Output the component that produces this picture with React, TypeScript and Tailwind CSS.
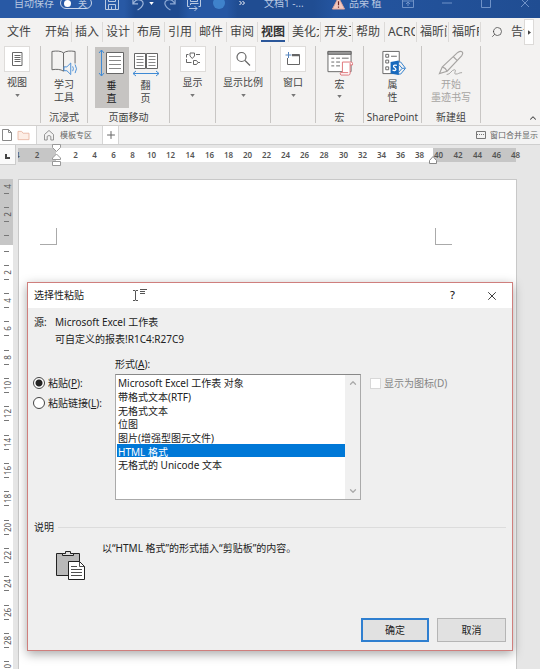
import { ChevronDown, ChevronUp, Plus, Search, X } from "lucide-react";
import { useState } from "react";
import type { ReactNode } from "react";

const tabs = ["插入", "设计", "布局", "引用", "邮件", "审阅", "视图"];
const addinTabs = ["美化大师", "开发工具", "帮助", "ACROBAT", "福昕阅读", "福昕PDF"];

const formats = [
	"Microsoft Excel 工作表 对象",
	"带格式文本(RTF)",
	"无格式文本",
	"位图",
	"图片(增强型图元文件)",
	"HTML 格式",
	"无格式的 Unicode 文本",
];

const rulerNumbers = Array.from({ length: 24 }, (_, i) => (i + 1) * 2);
const sideNumbers = Array.from({ length: 15 }, (_, i) => (i + 1) * 2);

function Caret() {
	return (
		<svg viewBox="0 0 6 4" className="h-[3px] w-[5px]" fill="currentColor">
			<path d="M0 0h6L3 4z" />
		</svg>
	);
}

function TitleBar() {
	return (
		<header className="h-[18px] overflow-hidden bg-[#2455a0] bg-[linear-gradient(90deg,#2859a5_0,#2859a5_23%,#1f4b90_25%,#1f4b90_33%,#2657a3_35%,#2657a3_42%,#204d92_44%,#204d92_58%,#2455a0_62%,#204d92_100%)] text-[10px] text-[#b9c9e2]">
			<div className="-mt-[13px] flex h-8 items-center whitespace-nowrap">
				<span className="ml-2 w-[46px] shrink-0 text-right">自动保存</span>
				<button
					type="button"
					aria-label="自动保存"
					className="ml-1.5 flex h-3 w-8 shrink-0 items-center justify-between rounded-full border border-[#c8d5ea] pl-[3px] pr-1 text-[9px] leading-none"
				>
					<i className="size-[7px] rounded-full bg-white" />
					<span>关</span>
				</button>
				<button type="button" aria-label="保存" className="flex w-10 shrink-0 justify-center">
					<svg viewBox="0 0 16 16" className="size-4" fill="none" stroke="currentColor">
						<path d="M1.500 1.500h13v13h-13zM4.500 1.500v5h7v-5M4.500 14.500v-5h7v5M7.500 11.500v3" />
					</svg>
				</button>
				<button type="button" aria-label="撤消" className="w-[13px] shrink-0">
					<svg viewBox="0 0 14 16" className="h-4 w-[13px]" fill="none" stroke="#9db5da" strokeWidth="1.300">
						<path d="M1 4v5h5.500M1 9C3 5.500 6 3.500 9.500 5s4 6-3.500 10.500" />
					</svg>
				</button>
				<span className="flex w-3 shrink-0 justify-center text-white">
					<Caret />
				</span>
				<button type="button" aria-label="恢复" className="flex w-6 shrink-0 justify-center">
					<svg viewBox="0 0 14 16" className="h-4 w-[13px]" fill="none" stroke="#8aa7d3" strokeWidth="1.300">
						<path d="M13 4v5H7.500M13 9C11 5.500 8 3.500 4.500 5S.5 11 8 15.500" />
					</svg>
				</button>
				<button type="button" aria-label="发送" className="flex w-[26px] shrink-0 justify-center">
					<svg viewBox="0 0 16 16" className="size-4" fill="none" stroke="currentColor">
						<path d="M3.500 11.500h-2v-10h13v10h-2M4.500 1.500v5h7v-5M4.500 10V8.500h8M3 13.500h8M8.500 11l2.500 2.500L8.500 16" />
					</svg>
				</button>
				<span className="flex w-6 shrink-0 justify-center">
					<i className="size-3 rounded-full bg-[#3f82cb]" />
				</span>
				<span className="flex w-[22px] shrink-0 justify-center text-white">
					<svg viewBox="0 0 6 6" className="size-[6px]" fill="none" stroke="currentColor">
						<path d="M.5 1l2 2-2 2M3.500 1l2 2-2 2" />
					</svg>
				</span>
				<span className="ml-[11px] w-[68px] shrink-0">文档1 -...</span>
				<svg viewBox="0 0 14 14" className="size-[13px] shrink-0">
					<path d="M7 .5L13.500 13H.5z" fill="#f2c9c0" stroke="#e3a79b" />
					<path d="M7 4.500v4.500M7 10.300v1.400" stroke="#6b2320" strokeWidth="1.300" />
				</svg>
				<span className="ml-1">品荣 植</span>
				<div className="-mr-1 ml-auto flex text-[#6f92c8]">
					{[
						"M1.500 2.500h11v9h-11zM1.500 5h11M7 10V6.500M5 8l2-2 2 2",
						"M2 7h10",
						"M2.500 2.500h9v9h-9z",
						"M3 3l8 8M11 3l-8 8",
					].map((d, i) => (
						<button
							key={d}
							type="button"
							aria-label={["功能区", "最小化", "最大化", "关闭"][i]}
							className="flex w-[39px] justify-center"
						>
							<svg viewBox="0 0 14 14" className="size-[14px]" fill="none" stroke="currentColor">
								<path d={d} />
							</svg>
						</button>
					))}
				</div>
			</div>
		</header>
	);
}

function RibbonTabs() {
	return (
		<nav className="flex h-7 items-center overflow-hidden whitespace-nowrap text-xs text-[#444]">
			<button type="button" className="w-10 shrink-0 pl-[7px] text-left">
				文件
			</button>
			<button type="button" className="h-5 w-8 shrink-0 border-r border-[#dcdad8] pl-[5px] text-left">
				开始
			</button>
			{tabs.map((t) => (
				<button
					key={t}
					type="button"
					className={
						t === "视图"
							? "flex h-5 w-[31px] shrink-0 items-center border-r border-[#dcdad8] pl-[3px] font-bold text-[#333]"
							: "flex h-5 w-[31px] shrink-0 items-center border-r border-[#dcdad8] pl-[3px]"
					}
				>
					{t === "视图" ? <span className="mt-0.5 border-b-2 border-[#2b579a]">{t}</span> : t}
				</button>
			))}
			{addinTabs.map((t) => (
				<button key={t} type="button" className="h-5 w-8 shrink-0 border-r border-[#dcdad8] pr-px pl-[3px]">
					<span className="block overflow-hidden text-left">{t}</span>
				</button>
			))}
			<button type="button" className="ml-2.5 flex min-w-0 flex-1 items-center gap-2">
				<Search className="size-3 shrink-0 -scale-x-100" strokeWidth={1.5} />
				<span className="overflow-hidden">告诉我</span>
			</button>
			<button
				type="button"
				aria-label="更多选项卡"
				className="mr-1.5 flex h-[26px] w-[10px] shrink-0 items-center justify-center border border-[#dcdad8] bg-white"
			>
				<svg viewBox="0 0 4 6" className="h-[5px] w-[3px]" fill="currentColor">
					<path d="M0 0v6l4-3z" />
				</svg>
			</button>
		</nav>
	);
}

function Group({ className, label, children }: { className: string; label?: string; children: ReactNode }) {
	return (
		<section className={`flex h-[77px] shrink-0 flex-col border-r border-[#c8c6c4] ${className}`}>
			<div className="flex flex-1 justify-center">{children}</div>
			{label && <h2 className="text-center text-[10px] leading-3 whitespace-nowrap">{label}</h2>}
		</section>
	);
}

function BoxButton({ label, children }: { label: string; children: ReactNode }) {
	return (
		<button type="button" className="flex flex-col items-center text-[10px] leading-4 whitespace-nowrap">
			<span className="flex size-[26px] items-center justify-center border border-[#dedcda] bg-white">
				<svg viewBox="0 0 16 16" className="size-4" fill="none" stroke="#666">
					{children}
				</svg>
			</span>
			<span className="mt-0.5">{label}</span>
			<span className="mt-1 text-[#777]">
				<Caret />
			</span>
		</button>
	);
}

function Ribbon() {
	return (
		<div className="flex h-20 border-b border-[#d2d0ce] text-[#444]">
			<Group className="w-[41px] pr-1.5">
				<BoxButton label="视图">
					<path d="M3.500 1.500h9.500v13H3.500z" />
					<path d="M5.500 4.500h6M5.500 6.500h6M5.500 8.500h6M5.500 10.500h6" />
				</BoxButton>
			</Group>
			<Group className="w-[47px]" label="沉浸式">
				<button type="button" className="flex flex-col items-center pt-1 text-[10px] leading-[13px]">
					<svg viewBox="0 0 28 27" className="mb-0.5 h-[26px] w-7" fill="none" stroke="#666">
						<path d="M13.500 3C11 .8 6 .8 1.500 1.500v19c4.500-.7 9-.7 12 1.500M13.500 3c2.500-2.200 7.500-2.200 12-1.500V14M13.500 3v19" />
						<path d="M14 17.500h3l4-4v12l-4-4h-3z" stroke="#4a8fd6" fill="#f3f2f1" />
						<path d="M23 17q1.500 2.500 0 5M25.500 15q3 4.500 0 9" stroke="#4a8fd6" />
					</svg>
					<span>学习</span>
					<span>工具</span>
				</button>
			</Group>
			<Group className="w-[82px]" label="页面移动">
				<button type="button" aria-pressed="true" className="mt-px flex h-[61px] w-[34px] flex-col items-center bg-[#c6c4c2] pt-0.5 text-[10px] leading-[13px] text-[#222]">
					<svg viewBox="0 0 28 28" className="mb-0.5 h-7" fill="none" stroke="#666">
						<path d="M8.500 3.500h17v21h-17z" fill="#fff" />
						<path d="M11 7.500h12M11 11.500h12M11 15.500h12M11 19.500h12" stroke="#888" />
						<path d="M3.500 1v26M1 4l2.500-3L6 4M1 24l2.500 3L6 24" stroke="#3f8ad4" />
					</svg>
					<span>垂</span>
					<span>直</span>
				</button>
				<button type="button" className="mt-px flex h-[61px] w-[34px] flex-col items-center pt-0.5 text-[10px] leading-[13px]">
					<svg viewBox="0 0 28 28" className="mb-0.5 h-7" fill="none" stroke="#666">
						<path d="M2.500 4.500h11v15h-11zM14.500 4.500h11v15h-11z" fill="#fff" />
						<path d="M4.500 7.500h7M4.500 10.500h7M4.500 13.500h7M4.500 16.500h7M16.500 7.500h7M16.500 10.500h7M16.500 13.500h7M16.500 16.500h7" stroke="#888" />
						<path d="M1 24.500h26M4 22l-3 2.500L4 27M24 22l3 2.500-3 2.500" stroke="#3f8ad4" />
					</svg>
					<span>翻</span>
					<span>页</span>
				</button>
			</Group>
			<Group className="w-[46px]">
				<BoxButton label="显示">
					<path d="M3.500 3.500h-2v3M5 2h4.500v3L7.250 7.500 5 5zM11 3.500h4M1.500 8v3.500h5M8.500 9.500h3l1.500 2-1.500 2h-3zM13 11.500h2" />
				</BoxButton>
			</Group>
			<Group className="w-[55px]">
				<BoxButton label="显示比例">
					<circle cx="6.500" cy="6" r="4.500" strokeWidth="1.200" />
					<path d="M10 9.500l5 5" strokeWidth="1.300" />
				</BoxButton>
			</Group>
			<Group className="w-[45px]">
				<BoxButton label="窗口">
					<path d="M2.500 7v6.500h12v-10H7" />
					<path d="M7 4.500h7.500" strokeWidth="1.500" />
					<path d="M3.500 1v6M.5 4h6" stroke="#5584bd" />
				</BoxButton>
			</Group>
			<Group className="w-12" label="宏">
				<button type="button" className="flex flex-col items-center pt-1 text-[10px] leading-[13px]">
					<svg viewBox="0 0 28 27" className="mb-0.5 h-[26px] w-7" fill="none" stroke="#666">
						<path d="M1.500 1.500h24v21h-24z" fill="#fff" />
						<path d="M1.500 1.500h24v3h-24z" fill="#999" />
						<path d="M5 8.500h3M10 8.500h4M16 8.500h7M5 12.500h3M10 12.500h4M5 16.500h3M10 16.500h4" />
						<path d="M16.500 12.500h9q1.500 0 1.500 1.500v1.500h-2.500v8.500q0 2-1.500 2h-8q-1.500-1-.5-2.500h2z" fill="#fff" stroke="#df7378" />
						<path d="M24.500 15.500v-2M16.500 23.500h6" stroke="#df7378" />
					</svg>
					<span>宏</span>
					<span className="mt-1 text-[#777]">
						<Caret />
					</span>
				</button>
			</Group>
			<Group className="w-[58px]" label="SharePoint">
				<button type="button" className="flex flex-col items-center pt-1 text-[10px] leading-[13px]">
					<svg viewBox="0 0 28 27" className="mb-0.5 h-[26px] w-7" fill="none" stroke="#666">
						<path d="M3.500 1.500h17v23h-17z" fill="#fff" />
						<path d="M6.500 4.500h3v3h-3zM6.500 10.500h3v3h-3zM6.500 17.500h3v3h-3zM12 6.500h6" />
						<path d="M19 12.500h3l5 6.500-5 6h-3z" fill="#f3f2f1" stroke="#2f7fcd" />
						<path d="M20 15l3.500 4-3.500 4M23.500 19h3" stroke="#2f7fcd" />
						<path d="M11.500 12.500L20 11v15l-8.500-1.500z" fill="#1769bd" stroke="none" />
						<path d="M18 16c-3.500-1-4.500 1-2.200 2.500s1.200 3.500-2.300 2.500" stroke="#fff" strokeWidth="1.300" />
					</svg>
					<span>属</span>
					<span>性</span>
				</button>
			</Group>
			<Group className="w-[59px]" label="新建组">
				<button type="button" disabled className="flex flex-col items-center pt-1 text-[10px] leading-[13px] whitespace-nowrap text-[#a6a4a2]">
					<svg viewBox="0 0 28 27" className="mb-0.5 h-[26px] w-7" fill="none" stroke="currentColor">
						<path d="M5 17.500L21 2.500q3-2 4.500-.5t-.5 4L10 22l-8 2.500zM5 17.500q3.500 1 5 4.500M16.500 7l4 4" strokeWidth="1.200" />
						<path d="M9.500 25.500c4 0 5-5 8-5s-1.500 4.500 1.500 4.500 3-1.500 6.500-1.500" />
					</svg>
					<span>开始</span>
					<span>墨迹书写</span>
				</button>
			</Group>
			<button type="button" aria-label="折叠功能区" className="mr-0.5 mb-0.5 ml-auto self-end">
				<ChevronUp className="size-2.5" strokeWidth={2.5} />
			</button>
		</div>
	);
}

function DocumentTabs() {
	return (
		<div className="flex h-[19px] items-stretch border-b border-[#cfcfcf] bg-[#f3f3f3] text-[8px] text-[#666]">
			<div className="flex w-[37px] items-center gap-1 border-r border-[#d5d5d5] bg-white pl-px">
				<button type="button" aria-label="新建">
					<svg viewBox="0 0 12 12" className="size-3" fill="none" stroke="#888">
						<path d="M1.500 .5h6l3 3v8h-9zM7.500 .5v3h3" />
					</svg>
				</button>
				<button type="button" aria-label="打开">
					<svg viewBox="0 0 14 12" className="h-[11px] w-[13px]" fill="#fdeee6" stroke="#e9b9a6">
						<path d="M1 10.500v-9h4l1.500 2H13v7z" />
					</svg>
				</button>
			</div>
			<button type="button" className="flex w-[65px] items-center gap-1.5 pl-[7px] whitespace-nowrap">
				<svg viewBox="0 0 11 12" className="h-3 w-[10px] shrink-0" fill="none" stroke="#888">
					<path d="M.5 5.500l5-4.500 5 4.500v6h-3v-4q-2-2-4 0v4h-3z" />
				</svg>
				模板专区
			</button>
			<button type="button" aria-label="新建标签" className="flex w-[17px] items-center justify-center border-x border-[#d5d5d5] bg-white">
				<Plus className="size-3" />
			</button>
			<button type="button" className="mr-0.5 ml-auto flex items-center gap-1 whitespace-nowrap">
				<svg viewBox="0 0 10 8" className="h-2 w-[10px]" fill="none" stroke="#777">
					<path d="M.5 .5h9v7h-9z" />
					<path d="M1 3.500h8" strokeDasharray="1 1" />
				</svg>
				窗口合并显示
			</button>
		</div>
	);
}

function Ruler() {
	return (
		<div className="flex h-[35px] bg-[#e6e6e6] text-[8px] font-semibold text-[#555]">
			<div className="flex h-5 w-4 items-center justify-center border-r border-b border-[#ccc] bg-[#fafafa]">
				<i className="mt-1 size-[5px] border-b-2 border-l-2 border-[#444]" />
			</div>
			<div className="relative mt-[3px] mr-6 ml-0.5 flex h-[14px] min-w-0 flex-1 items-center">
				<div className="absolute inset-0 flex bg-white">
					<i className="w-[38px] bg-[#c6c6c6]" />
					<i className="ml-auto w-[83px] bg-[#c6c6c6]" />
				</div>
				<span className="relative w-[9px] shrink-0 overflow-hidden">
					<span className="-ml-[3px]">4</span>
				</span>
				<span className="relative w-5 shrink-0 text-center">2</span>
				<svg viewBox="0 0 19 22" className="relative h-[22px] w-[19px] shrink-0" fill="#fff" stroke="#999">
					<path d="M5.500 .5h8v3l-4 4-4-4zM5.500 15.500v-1.500l4-4 4 4v1.500zM5.500 17.500h8v4h-8z" />
				</svg>
				{rulerNumbers.map((n) => (
					<span
						key={n}
						className={n % 14 === 0 ? "relative w-5 shrink-0 text-center" : "relative w-[19px] shrink-0 text-center"}
					>
						{n}
					</span>
				))}
				<svg viewBox="0 0 8 8" className="absolute right-[79px] -bottom-0.5 size-2" fill="#fff" stroke="#888">
					<path d="M.5 7.500v-3l3.500-4 3.500 4v3z" />
				</svg>
			</div>
		</div>
	);
}

function SideMark({ n }: { n: number }) {
	return (
		<>
			<i className="h-px w-[5px] bg-[#777]" />
			<span className="flex h-[13px] w-3 -rotate-90 items-center justify-center">{n}</span>
			<i className="h-px w-[5px] bg-[#777]" />
		</>
	);
}

function SideRuler() {
	return (
		<div className="h-full w-[13px] overflow-hidden bg-white text-[8px] leading-none text-[#555]">
			<div className="flex h-[66px] flex-col items-center bg-[#c6c6c6] pt-px">
				<span className="flex h-[13px] w-3 -rotate-90 items-center justify-center">4</span>
				<i className="h-px w-[5px] bg-[#777]" />
				<div className="mt-[13px] flex flex-col items-center">
					<SideMark n={2} />
				</div>
				<i className="mt-[13px] h-px w-[5px] bg-[#777]" />
			</div>
			<i className="mx-auto mt-1.5 mb-[6px] block h-px w-[5px] bg-[#777]" />
			{sideNumbers.map((n) => (
				<div
					key={n}
					className={n % 6 === 0 ? "flex h-[29px] flex-col items-center justify-center" : "flex h-7 flex-col items-center justify-center"}
				>
					<SideMark n={n} />
				</div>
			))}
		</div>
	);
}

function PasteDialog() {
	const [format, setFormat] = useState("HTML 格式");

	return (
		<div
			role="dialog"
			aria-labelledby="paste-title"
			className="absolute top-[103px] right-[27px] left-[27px] border border-[#cf7f7d] bg-[#efefef] text-[10px] text-[#222] shadow-[0_3px_10px_rgba(0,0,0,0.35)]"
		>
			<div className="flex h-[25px] items-center bg-white pl-1.5">
				<h1 id="paste-title">选择性粘贴</h1>
				<svg viewBox="0 0 16 14" className="ml-12 h-[14px] w-4" fill="none" stroke="#555">
					<path d="M1 1.500h2l.5.5.5-.5h2M3.500 2v9M1 11.500h2l.5-.5.5.5h2" />
					<path d="M8 .5h7M8 2.500h5M8 4.500h5" />
				</svg>
				<button type="button" aria-label="帮助" className="ml-auto w-[39px] text-[11px] font-medium">
					?
				</button>
				<button type="button" aria-label="关闭" className="flex w-10 justify-center">
					<X className="size-[14px]" strokeWidth={1.5} />
				</button>
			</div>
			<form className="px-1.5 pt-1.5 pb-2" onSubmit={(e) => e.preventDefault()}>
				<dl className="flex leading-[17px]">
					<dt className="w-[21px]">源:</dt>
					<dd>
						Microsoft Excel 工作表
						<br />
						可自定义的报表!R1C4:R27C9
					</dd>
				</dl>
				<div className="mt-2 flex">
					<fieldset className="w-[81px] shrink-0 pt-[17px]">
						<label className="-ml-px flex h-5 items-center gap-[3px] whitespace-nowrap">
							<input
								type="radio"
								name="mode"
								defaultChecked
								className="size-3 appearance-none rounded-full border border-[#444] bg-white checked:bg-[radial-gradient(circle,#222_0,#222_3px,#fff_4px)]"
							/>
							<span>
								粘贴(<u>P</u>):
							</span>
						</label>
						<label className="-ml-px flex h-5 items-center gap-[3px] whitespace-nowrap">
							<input
								type="radio"
								name="mode"
								className="size-3 appearance-none rounded-full border border-[#444] bg-white checked:bg-[radial-gradient(circle,#222_0,#222_3px,#fff_4px)]"
							/>
							<span>
								粘贴链接(<u>L</u>):
							</span>
						</label>
					</fieldset>
					<div className="w-[246px]">
						<label htmlFor="format" className="block h-[18px] leading-4">
							形式(<u>A</u>):
						</label>
						<div className="flex h-[126px] border border-[#aaa] border-t-[#888] bg-white">
							<select
								id="format"
								size={7}
								value={format}
								onChange={(e) => setFormat(e.target.value)}
								className="h-full min-w-0 flex-1 appearance-none overflow-hidden pl-px outline-none"
							>
								{formats.map((f, i) => (
									<option
										key={f}
										value={f}
										className={`min-h-0 p-0 pl-px text-[#222] checked:bg-[#0078d7] checked:bg-[linear-gradient(#0078d7,#0078d7)] checked:text-white ${
											i % 3 === 2 ? "h-[13px] leading-[13px]" : "h-[14px] leading-[14px]"
										}`}
									>
										{f}
									</option>
								))}
							</select>
							<div className="flex w-[15px] flex-col items-center justify-between bg-[#f0f0f0] py-[3px] text-[#aaa]">
								<ChevronUp className="size-2.5" strokeWidth={3} />
								<ChevronDown className="size-2.5" strokeWidth={3} />
							</div>
						</div>
					</div>
					<label className="mt-[17px] ml-[9px] flex h-5 items-center gap-[3px] self-start text-[#858585]">
						<input type="checkbox" disabled className="size-[11px] appearance-none border border-[#d8d8d8] bg-white" />
						显示为图标(D)
					</label>
				</div>
				<div className="mt-[19px] flex h-4 items-center gap-1">
					<h2>说明</h2>
					<hr className="flex-1 border-[#dcdcdc]" />
				</div>
				<div className="mt-[5px] flex h-[68px] items-start pl-[22px]">
					<svg viewBox="0 0 30 31" className="mt-2.5 h-[31px] w-[30px]" stroke="#222">
						<path d="M.5 3.500h23v22H.5z" fill="#b9b9b9" />
						<path d="M6.500 5.500v-2h3v-2h5v2h3v2z" fill="#ddd" />
						<path d="M12.500 11.500h11l5 5v13h-16z" fill="#fff" />
						<path d="M23.500 11.500v5h5M15 16.500h6M15 19.500h11M15 22.500h11M15 25.500h11" fill="none" strokeWidth=".8" />
					</svg>
					<p className="ml-4 leading-4">以“HTML 格式”的形式插入“剪贴板”的内容。</p>
				</div>
				<div className="mt-[10px] flex justify-end gap-2">
					<button type="submit" className="h-6 w-[68px] border-2 border-[#2f7fd0] bg-[#e1e1e1]">
						确定
					</button>
					<button type="button" className="h-6 w-[69px] border border-[#b5b5b5] bg-[#e1e1e1]">
						取消
					</button>
				</div>
			</form>
		</div>
	);
}

export default function App() {
	return (
		<div className="flex h-screen flex-col overflow-hidden bg-[#f3f2f1] font-['Noto_Sans','Noto_Sans_CJK_SC',sans-serif]">
			<TitleBar />
			<RibbonTabs />
			<Ribbon />
			<DocumentTabs />
			<Ruler />
			<main className="relative -mt-px flex min-h-0 flex-1 bg-[#e6e6e6]">
				<SideRuler />
				<div className="mr-[23px] ml-[5px] flex flex-1 items-start justify-between border border-b-0 border-[#c8c8c8] bg-white pt-12 pr-16 pl-[21px]">
					<i className="size-[17px] border-r border-b border-[#aaa]" />
					<i className="size-[17px] border-b border-l border-[#aaa]" />
				</div>
				<PasteDialog />
			</main>
		</div>
	);
}
